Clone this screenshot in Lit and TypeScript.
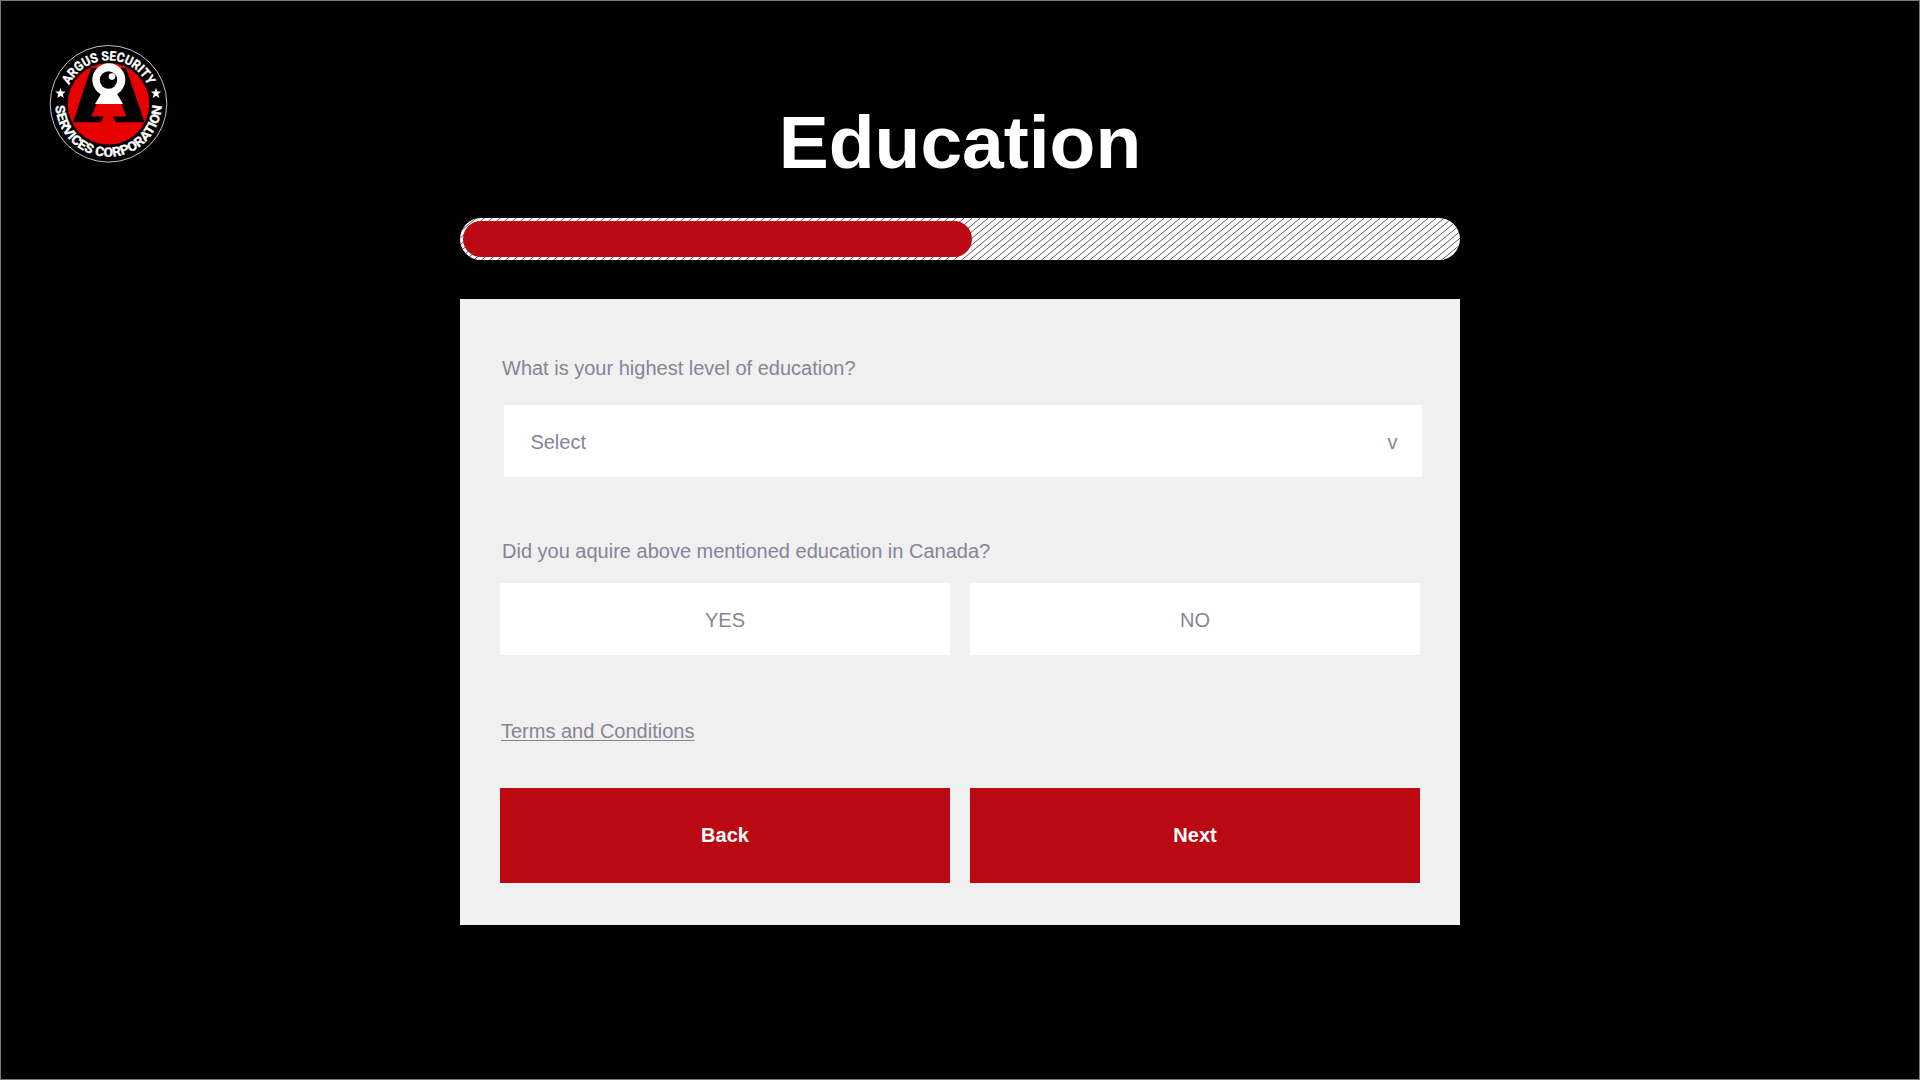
import { LitElement, html, css } from "lit";
import { customElement } from "lit/decorators.js";

// Diagonal hatch strokes, 8px apart, rising to the right across the bar.
const BAR_WIDTH = 1000;
const BAR_HEIGHT = 42;
const RUN = 50.6;
const hatchPath = Array.from({ length: 133 }, (_, i) => {
  const x = 0.3 + i * 8;
  return `M${(x - RUN).toFixed(1)} ${BAR_HEIGHT}L${x.toFixed(1)} 0`;
}).join("");

@customElement("argus-logo")
class ArgusLogo extends LitElement {
  static styles = css`
    :host { display: block; width: 140px; height: 140px; }
    svg { display: block; }
    .ring { font-family: Roboto, "Liberation Sans", sans-serif; font-weight: 700; font-size: 13px; fill: #fff; stroke: #fff; stroke-width: 0.35px; }
  `;
  render() {
    return html`<svg width="140" height="140" viewBox="0 0 140 140">
      <defs>
        <path id="top" d="M25 67.8 A43.5 43.5 0 1 1 112 67.8" />
        <path id="bottom" d="M15.5 67.8 A53 53 0 0 0 121.5 67.8" />
      </defs>
      <circle cx="68.5" cy="67.8" r="58.3" fill="#000" stroke="#d8d8d8" stroke-width="0.9" />
      <circle cx="68.5" cy="67.8" r="40.8" fill="#e60000" />
      <path d="M51 32 L86 32 L104.5 86.2 L75.8 86.2 L73 80.5 L86.3 80.5 L79 60 L60 60 L51.3 80.5 L63.5 80.5 L61 86.2 L33 86.2 Z" fill="#000" />
      <path d="M61 58 L77 58 L83 68 L55 68 Z" fill="#fff" />
      <circle cx="68.8" cy="43.8" r="16.5" fill="#fff" />
      <circle cx="68.5" cy="44" r="8.7" fill="#000" />
      <circle cx="72" cy="40.6" r="3.3" fill="#fff" />
      <path fill="#fff" d="M20.5 51.8 L21.8 55.5 L25.8 55.6 L22.7 58.1 L23.8 62 L20.5 59.7 L17.2 62 L18.3 58.1 L15.2 55.6 L19.2 55.5 Z" />
      <path fill="#fff" d="M116 51.8 L117.3 55.5 L121.3 55.6 L118.2 58.1 L119.3 62 L116 59.7 L112.7 62 L113.8 58.1 L110.7 55.6 L114.7 55.5 Z" />
      <text class="ring" text-anchor="middle"><textPath href="#top" startOffset="50%" textLength="98" lengthAdjust="spacingAndGlyphs">ARGUS SECURITY</textPath></text>
      <text class="ring" text-anchor="middle"><textPath href="#bottom" startOffset="50%" textLength="162" lengthAdjust="spacingAndGlyphs">SERVICES CORPORATION</textPath></text>
    </svg>`;
  }
}

@customElement("app-root")
class AppRoot extends LitElement {
  static styles = css`
    :host {
      display: block; width: 1920px; height: 1080px; box-sizing: border-box;
      background: #000; border: 1px solid #797979; overflow: hidden; position: relative;
      font: 20px/24px "Liberation Sans", Arial, sans-serif; color: #868497;
    }
    argus-logo { position: absolute; left: 39px; top: 35px; }
    main { width: 1000px; margin: 0 auto; display: flex; flex-direction: column; }
    h1 { margin: 96px 0 0; height: 90px; font-size: 75px; line-height: 90px; color: #fff; text-align: center; }
    .bar { margin-top: 31px; height: 42px; border-radius: 21px; overflow: hidden; display: flex; box-sizing: border-box; padding: 3px; background: #fff; position: relative; }
    .hatch { position: absolute; left: 0; top: 0; }
    .fill { width: 509px; height: 36px; border-radius: 18px; background: #ba0912; position: relative; }
    .card { margin-top: 39px; height: 626px; box-sizing: border-box; background: #f0f0f0; padding: 57px 40px 0; display: flex; flex-direction: column; }
    .label { padding-left: 2px; height: 24px; }
    .select { margin: 25px -2px 0 4.4px; height: 72px; box-sizing: border-box; background: #fff; padding: 1px 24.6px 0 26px; display: flex; justify-content: space-between; align-items: center; }
    .second { margin-top: 62px; }
    .row { display: grid; grid-template-columns: 1fr 1fr; gap: 20px; }
    .cell { background: #fff; height: 72px; display: flex; align-items: center; justify-content: center; padding-top: 2px; box-sizing: border-box; }
    .answers { margin-top: 20px; }
    .terms { margin: 64px 0 0 1px; height: 24px; align-self: flex-start; text-decoration: underline; text-decoration-thickness: 1px; text-underline-offset: 2px; }
    .actions { margin-top: 45px; }
    .action { height: 95px; background: #ba0912; color: #fff; font-weight: 700; padding: 0 0 1px; }
  `;
  render() {
    return html`
      <argus-logo></argus-logo>
      <main>
        <h1>Education</h1>
        <div class="bar">
          <svg class="hatch" width=${BAR_WIDTH} height=${BAR_HEIGHT}>
            <path d=${hatchPath} stroke="#333" stroke-width="0.8" fill="none" />
          </svg>
          <div class="fill"></div>
        </div>
        <section class="card">
          <div class="label">What is your highest level of education?</div>
          <div class="select"><span>Select</span><span>v</span></div>
          <div class="label second">Did you aquire above mentioned education in Canada?</div>
          <div class="row answers"><div class="cell">YES</div><div class="cell">NO</div></div>
          <a class="terms">Terms and Conditions</a>
          <div class="row actions"><div class="cell action">Back</div><div class="cell action">Next</div></div>
        </section>
      </main>`;
  }
}
